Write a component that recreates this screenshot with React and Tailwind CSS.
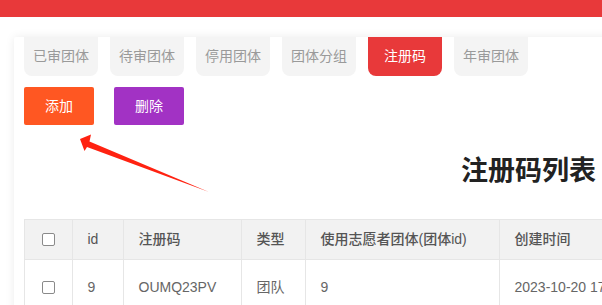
import React from "react";

const tabs = ["已审团体", "待审团体", "停用团体", "团体分组", "注册码", "年审团体"];

const cols = [
  { w: 47.5, h: "", b: "" },
  { w: 51, h: "id", b: "9" },
  { w: 118, h: "注册码", b: "OUMQ23PV" },
  { w: 64, h: "类型", b: "团队" },
  { w: 194, h: "使用志愿者团体(团体id)", b: "9" },
  { w: 180, h: "创建时间", b: "2023-10-20 17:35:12" },
];

function Checkbox() {
  return <div className="w-[13px] h-[13px] border border-[#8a8a8a] rounded-[2px] bg-white" />;
}

export default function App() {
  return (
    <div
      className="relative w-[602px] h-[305px] overflow-hidden bg-white"
      style={{ fontFamily: '"Liberation Sans", "Noto Sans CJK SC", sans-serif' }}
    >
      <div className="h-[17px] bg-[#e8393a]" />
      <div className="pt-[20px] pl-[14px]">
        <div className="w-[700px] h-[400px] bg-white rounded-[2px] shadow-[0_0_10px_rgba(0,0,0,0.08)] pl-[10px]">
          <div className="flex gap-[12px]">
            {tabs.map((t, i) => (
              <div
                key={t}
                className={
                  "w-[74px] h-[39px] flex items-center justify-center rounded-b-[8px] text-[14px] " +
                  (i === 4 ? "bg-[#e8393a] text-white" : "bg-[#f4f4f4] text-[#9a9a9a]")
                }
              >
                {t}
              </div>
            ))}
          </div>
          <div className="flex gap-[20px] mt-[11px]">
            <div className="w-[70px] h-[38px] rounded-[2px] bg-[#ff5722] text-white text-[14px] flex items-center justify-center">
              添加
            </div>
            <div className="w-[70px] h-[38px] rounded-[2px] bg-[#a232c4] text-white text-[14px] flex items-center justify-center">
              删除
            </div>
          </div>
          <div className="mt-[28px] pl-[437px] text-[27px] leading-[36px] font-bold text-[#222]">
            注册码列表
          </div>
          <div className="mt-[30px] border-l border-t border-[#e6e6e6] inline-flex flex-col">
            <div className="flex bg-[#f2f2f2] h-[40px]">
              {cols.map((c, i) => (
                <div
                  key={i}
                  className={
                    "border-r border-b border-[#e6e6e6] flex items-center text-[14px] font-medium text-[#555] " +
                    (i === 0 ? "justify-center" : "pl-[15px]")
                  }
                  style={{ width: c.w }}
                >
                  {i === 0 ? <Checkbox /> : c.h}
                </div>
              ))}
            </div>
            <div className="flex h-[55px]">
              {cols.map((c, i) => (
                <div
                  key={i}
                  className={
                    "border-r border-b border-[#e6e6e6] flex items-center text-[14px] text-[#666] " +
                    (i === 0 ? "justify-center" : "pl-[15px]")
                  }
                  style={{ width: c.w }}
                >
                  {i === 0 ? <Checkbox /> : c.b}
                </div>
              ))}
            </div>
          </div>
        </div>
      </div>
      <svg className="absolute left-0 top-0 pointer-events-none" width="602" height="305">
        <polygon points="80,139 91,134.5 89.5,141.5 209,192 87,147 84.5,151" fill="#ff2211" />
      </svg>
    </div>
  );
}
